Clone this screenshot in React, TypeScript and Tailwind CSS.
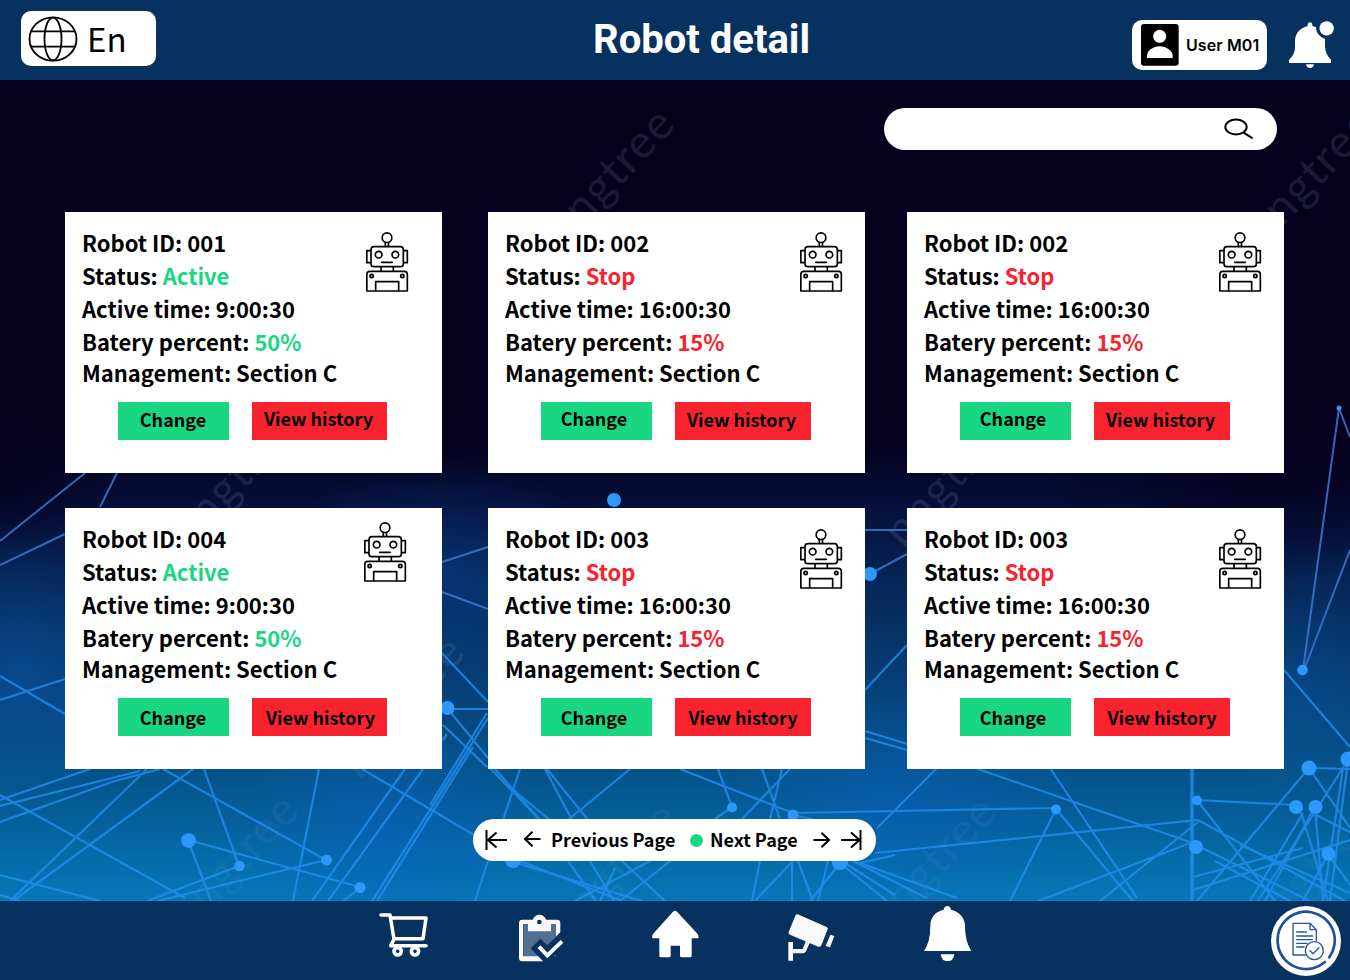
import React from "react";

type Seg = [number, number, number, number];

const upperLines: Seg[] = [
  [0, 541, 85, 473], [100, 507, 117, 473], [0, 565, 65, 534], [1339, 408, 1303, 670],
  [1350, 550, 1304, 670], [1339, 408, 1350, 437], [865, 530, 907, 530], [870, 574, 907, 554],
  [442, 562, 488, 547], [442, 592, 488, 609],
];

const lines: Seg[] = [
  [0, 676, 65, 714], [0, 700, 65, 679], [0, 800, 90, 769], [0, 806, 140, 771], [0, 822, 115, 781],
  [115, 781, 160, 769], [0, 795, 185, 898], [147, 769, 10, 901], [193, 769, 13, 901],
  [0, 875, 100, 901], [0, 895, 20, 901], [188, 840, 360, 887], [188, 840, 211, 901],
  [239, 866, 204, 769], [239, 866, 147, 901], [326, 860, 163, 769], [326, 860, 157, 901],
  [319, 769, 293, 901], [405, 769, 312, 901], [423, 769, 328, 901], [362, 769, 513, 858],
  [470, 747, 372, 901], [473, 747, 377, 901], [360, 888, 343, 901],
  [442, 653, 488, 702], [447, 709, 488, 709], [447, 708, 488, 758], [443, 725, 487, 767],
  [487, 713, 430, 805], [488, 718, 430, 810], [442, 741, 447, 734],
  [520, 769, 503, 820], [488, 766, 540, 820], [495, 769, 540, 820], [513, 790, 550, 820],
  [545, 769, 572, 820], [547, 769, 588, 820], [630, 769, 568, 820], [680, 769, 793, 813],
  [718, 769, 732, 807], [715, 819, 732, 807], [793, 813, 1056, 808], [762, 769, 780, 819],
  [782, 769, 770, 819], [790, 769, 742, 819], [793, 815, 825, 822],
  [488, 861, 475, 901], [513, 862, 642, 901], [520, 861, 622, 901], [568, 861, 596, 901], [590, 861, 614, 901],
  [622, 861, 665, 901], [670, 861, 620, 901], [650, 861, 575, 901], [615, 868, 600, 901],
  [760, 861, 752, 901], [793, 861, 755, 901], [792, 861, 792, 901], [798, 861, 813, 901],
  [828, 861, 818, 901], [840, 863, 810, 901], [840, 863, 887, 901], [845, 863, 895, 895],
  [853, 861, 927, 898], [860, 863, 957, 898], [860, 863, 895, 855],
  [865, 690, 907, 645], [865, 731, 907, 744], [865, 738, 907, 750], [937, 768, 877, 828],
  [975, 768, 1193, 843], [1050, 768, 1137, 898], [1056, 809, 1133, 901], [1056, 809, 1010, 901],
  [875, 853, 1198, 820], [1197, 800, 1296, 805], [1284, 670, 1350, 747], [1193, 842, 1038, 901],
  [1198, 822, 1100, 901], [1198, 820, 1345, 901], [1197, 800, 1275, 901], [1196, 845, 1310, 901],
  [1309, 768, 1197, 901], [1309, 768, 1350, 828], [1309, 768, 1350, 769], [1193, 877, 1303, 848],
  [1303, 813, 1250, 901], [1350, 757, 1258, 901], [1315, 808, 1323, 901], [1343, 768, 1323, 901],
  [1301, 812, 1328, 901], [1348, 760, 1330, 901], [1315, 806, 1265, 901], [1316, 815, 1350, 832],
  [1328, 854, 1350, 885], [1328, 854, 1303, 901], [1193, 890, 1350, 840], [1240, 845, 1350, 893], [1215, 861, 1290, 901],
];

const nodes: [number, number, number][] = [
  [614, 500, 7], [870, 574, 7], [447.5, 708, 7], [188.5, 840.5, 7.3], [239.5, 866, 5.3],
  [326.5, 860, 5.5], [360, 887.5, 5.5], [513, 860, 8], [732, 807.5, 5], [793, 815, 5.5], [840, 862, 8],
  [1056, 809.5, 5], [1197, 800.5, 5], [1196, 847, 7], [1309, 768, 7.5], [1348, 759, 7.5],
  [1296, 807, 7], [1315.5, 807, 7], [1328.5, 854, 7], [1302.5, 670, 5.3], [1339, 408, 2.5],
];

const marks: [number, number, number][] = [
  [564, 247, 0.17], [1264, 247, 0.17], [189, 549, 0.16], [903, 549, 0.16],
  [354, 775, 0.15], [188, 933, 0.09], [886, 935, 0.09], [568, 941, 0.1], [1266, 941, 0.07],
];

function Backdrop() {
  return (
    <svg className="absolute inset-0 h-full w-full" viewBox="0 80 1350 821" preserveAspectRatio="none" aria-hidden="true">
      <defs>
        <linearGradient id="sky" x1="0" y1="80" x2="0" y2="901" gradientUnits="userSpaceOnUse">
          <stop offset="0" stopColor="#05001c" />
          <stop offset="0.44" stopColor="#05001e" />
          <stop offset="0.52" stopColor="#06103a" />
          <stop offset="0.62" stopColor="#06285a" />
          <stop offset="0.74" stopColor="#064078" />
          <stop offset="0.86" stopColor="#05568e" />
          <stop offset="1" stopColor="#0678b9" />
        </linearGradient>
        <radialGradient id="glow"><stop offset="0" stopColor="#0a5fc0" stopOpacity="0.65" /><stop offset="1" stopColor="#0a5fc0" stopOpacity="0" /></radialGradient>
        <radialGradient id="dark"><stop offset="0" stopColor="#05001e" stopOpacity="0.9" /><stop offset="1" stopColor="#05001e" stopOpacity="0" /></radialGradient>
      </defs>
      <rect x="0" y="80" width="1350" height="821" fill="url(#sky)" />
      <ellipse cx="20" cy="670" rx="130" ry="130" fill="url(#glow)" opacity="0.5" />
      <ellipse cx="440" cy="570" rx="170" ry="110" fill="url(#glow)" opacity="0.4" />
      <ellipse cx="390" cy="830" rx="150" ry="120" fill="url(#glow)" opacity="0.8" />
      <ellipse cx="900" cy="800" rx="180" ry="110" fill="url(#glow)" opacity="0.8" />
      <ellipse cx="1300" cy="690" rx="110" ry="110" fill="url(#glow)" opacity="0.3" />
      <ellipse cx="1270" cy="470" rx="240" ry="110" fill="url(#dark)" />
      <ellipse cx="0" cy="480" rx="120" ry="70" fill="url(#dark)" />
      <g fontFamily="Lato, sans-serif" fontSize="46" letterSpacing="1.5" fill="#8f9ccb">
        {marks.map(([x, y, o]) => (
          <text key={`${x}-${y}`} transform={`translate(${x} ${y}) rotate(-47)`} opacity={o}>pngtree</text>
        ))}
      </g>
      <g stroke="#3f78d0" strokeWidth="2" opacity="0.85">
        {upperLines.map(([a, b, c, d], i) => <line key={i} x1={a} y1={b} x2={c} y2={d} />)}
      </g>
      <g stroke="#2492f4" strokeWidth="2.2" opacity="0.75">
        {lines.map(([a, b, c, d], i) => <line key={i} x1={a} y1={b} x2={c} y2={d} />)}
        <line x1="1192" y1="768" x2="1192" y2="901" strokeWidth="3.5" />
      </g>
      {nodes.map(([x, y, r]) => <circle key={`${x}-${y}`} cx={x} cy={y} r={r} fill="#2c98fb" />)}
    </svg>
  );
}

function RobotIcon({ className }: { className: string }) {
  return (
    <svg className={`h-[60px] w-[43px] shrink-0 ${className}`} viewBox="948 96 129 180" fill="none" stroke="#000" strokeWidth="5" strokeLinejoin="round" strokeLinecap="round">
      <circle cx="1011" cy="113" r="14.5" />
      <path d="M1006 128v11M1015.500 128v11" />
      <rect x="963" y="140" width="97" height="60" rx="9" />
      <path d="M961 152h-10.500v36h10.500M1062 152h10v36h-10" />
      <circle cx="986" cy="164" r="10" />
      <circle cx="1036" cy="164" r="10" />
      <path d="M995 187h32" />
      <path d="M993 202v11M1030 202v11" />
      <path d="M950.500 273v-50q0-9 9-9h103.500q9 0 9 9v50z" />
      <path d="M977 272v-27h69v27" />
      <circle cx="965" cy="228" r="5" />
      <circle cx="1057" cy="228" r="5" />
    </svg>
  );
}

type Robot = {
  id: string; status: string; time: string; battery: string; tone: string;
  icon: string; change: string; history: string;
};

const green = "text-[#19d683]";
const red = "text-[#f8232f]";

const robots: Robot[] = [
  { id: "001", status: "Active", time: "9:00:30", battery: "50%", tone: green, icon: "mt-5 mr-[33px]", change: "pr-px pb-1", history: "w-[135px] pr-[2px] pb-[5px]" },
  { id: "002", status: "Stop", time: "16:00:30", battery: "15%", tone: red, icon: "mt-5 mr-[22px]", change: "pr-[5px] pb-[5px]", history: "w-[136px] pr-[3px] pb-[3px]" },
  { id: "002", status: "Stop", time: "16:00:30", battery: "15%", tone: red, icon: "mt-5 mr-[22px]", change: "pr-[5px] pb-[5px]", history: "w-[136px] pr-[3px] pb-[3px]" },
  { id: "004", status: "Active", time: "9:00:30", battery: "50%", tone: green, icon: "mt-3.5 mr-[35px]", change: "pr-px", history: "w-[135px] pl-[2px]" },
  { id: "003", status: "Stop", time: "16:00:30", battery: "15%", tone: red, icon: "mt-[21px] mr-[22px]", change: "pr-[5px]", history: "w-[136px]" },
  { id: "003", status: "Stop", time: "16:00:30", battery: "15%", tone: red, icon: "mt-[21px] mr-[22px]", change: "pr-[5px]", history: "w-[136px]" },
];

function RobotCard({ robot }: { robot: Robot }) {
  return (
    <article className="flex h-[261px] w-[377px] flex-col bg-white">
      <div className="flex h-[190px] items-start justify-between">
        <div className="pt-[14px] pl-[17px] text-[22px] font-bold whitespace-nowrap text-black">
          <p className="h-[33px] leading-[33px]">Robot ID: {robot.id}</p>
          <p className="h-[33px] leading-[33px]">Status: <span className={robot.tone}>{robot.status}</span></p>
          <p className="h-[33px] leading-[33px]">Active time: {robot.time}</p>
          <p className="h-8 leading-[32px]">Batery percent: <span className={robot.tone}>{robot.battery}</span></p>
          <p className="h-8 leading-[31px]">Management: Section C</p>
        </div>
        <RobotIcon className={robot.icon} />
      </div>
      <div className="flex gap-[23px] pl-[53px] text-[18px] font-bold whitespace-nowrap text-black">
        <button className={`flex h-[38px] w-[111px] items-center justify-center bg-[#19d683] ${robot.change}`}>Change</button>
        <button className={`flex h-[38px] items-center justify-center bg-[#f8232f] ${robot.history}`}>View history</button>
      </div>
    </article>
  );
}

function Header() {
  return (
    <header className="flex h-20 shrink-0 items-start bg-[#07325f]">
      <button className="mt-[11px] ml-[21px] flex h-[55px] w-[135px] items-center rounded-[10px] bg-white pl-[7px]">
        <svg className="h-[46px] w-[50px]" viewBox="84 46 150 138" fill="none" stroke="#000" strokeWidth="5.500">
          <ellipse cx="159" cy="115" rx="70.500" ry="65" />
          <ellipse cx="159" cy="115" rx="25.500" ry="64" />
          <path d="M93 92h132M93 138h132" />
        </svg>
        <span className="ml-[9px] pb-px text-[33px] leading-[54px] text-black">En</span>
      </button>
      <h1 className="ml-[437px] w-[220px] pt-[15px] font-[Roboto] text-[40px] leading-[50px] font-bold whitespace-nowrap text-white">Robot detail</h1>
      <button className="mt-5 ml-[319px] flex h-[50px] w-[135px] items-center rounded-[10px] bg-white pl-[9px]">
        <svg className="h-[42px] w-[38px] shrink-0" viewBox="0 0 114 126">
          <rect width="113" height="125" rx="9" fill="#000" />
          <circle cx="56" cy="37" r="19.500" fill="#fff" />
          <path d="M18 102V95C18 80 37 67 56 67s39 13 39 28v7z" fill="#fff" />
        </svg>
        <span className="ml-[7px] font-[Inter] text-[16px] font-semibold tracking-[0.1px] whitespace-nowrap text-black">User M01</span>
      </button>
      <svg className="mt-5 ml-[21px] h-12 w-[47px]" viewBox="1314 60 141 144" fill="#fff">
        <path d="M1317 189v-10Q1335 164 1335 140v-17q1-35 38-45v-5q1-6 7-6t7 6v5l11 4q0 25 27 35v23q2 24 18 39v10z" />
        <circle cx="1430" cy="85" r="21.500" />
        <path d="M1368 193h24q-2 11-12 11t-12-11z" />
      </svg>
    </header>
  );
}

function Pager() {
  return (
    <nav className="mt-[50px] ml-[473px] flex h-[42px] w-[403px] items-center rounded-full bg-white text-[18px] font-bold whitespace-nowrap text-black">
      <svg className="ml-[11px] h-[22px] w-[23px]" viewBox="0 0 23 22" fill="none" stroke="#000" strokeWidth="2"><path d="M2.500 1v20M23 11H4M12.500 3.500L4 11L12.500 18.500" /></svg>
      <svg className="ml-4 h-[22px] w-[18px]" viewBox="0 0 18 22" fill="none" stroke="#000" strokeWidth="2"><path d="M17.500 10H2M9.500 2.800L2 10l7.500 7.200" /></svg>
      <button className="ml-[10px] w-[125px] pb-[2px] text-left">Previous Page</button>
      <span className="ml-[14px] h-[13px] w-[13px] rounded-full bg-[#19d683]" />
      <button className="ml-[7px] w-[90px] pb-[2px] text-left">Next Page</button>
      <svg className="ml-[13px] h-[22px] w-[18px]" viewBox="0 0 18 22" fill="none" stroke="#000" strokeWidth="2"><path d="M.5 11H16M8.500 3.800l7.500 7.200L8.500 18.200" /></svg>
      <svg className="ml-[9px] h-[22px] w-[22px]" viewBox="0 0 22 22" fill="none" stroke="#000" strokeWidth="2"><path d="M20.500 1v20M1 11h19M11 3.500l8.500 7.500L11 18.500" /></svg>
    </nav>
  );
}

function Footer() {
  return (
    <footer className="flex h-[79px] shrink-0 items-start bg-[#07325f]">
      <svg className="mt-3 ml-[379px] h-[45px] w-[49px]" viewBox="57 38 147 135" fill="none" stroke="#fff" strokeWidth="10.500" strokeLinecap="round" strokeLinejoin="round">
        <path d="M63 44H90L102 117L92 136H198M93 53H198L189 115H103" />
        <circle cx="113" cy="153" r="11" strokeWidth="11" />
        <circle cx="165" cy="153" r="11" strokeWidth="11" />
      </svg>
      <svg className="mt-[13px] ml-[90px] h-[48px] w-[46px]" viewBox="474 42 138 144">
        <path d="M490 72h98v98h-98z" fill="#526f8f" />
        <path d="M487 59h31q7-15 20-15t21 15h32q10 0 10 10v28L588 110V72h-15v22h-69V72h-15v97h46l15 15h-63q-10 0-10-10V69q0-10 10-10z" fill="#f9f8fa" />
        <circle cx="538" cy="66" r="7" fill="#07325f" />
        <path d="M512 145l29-29 21 20 39-38 12 12v30l-46 44h-17z" fill="#07325f" />
        <path d="M537 140l25 26 44-42" fill="none" stroke="#f9f8fa" strokeWidth="12" />
      </svg>
      <svg className="mt-[9px] ml-[87px] h-12 w-12" viewBox="34 28 144 144" fill="#fff">
        <path d="M100 33q6-5 12 0l62 67q4 6 2 13h-20v52q0 5-5 5h-25q-5 0-5-5v-30H93v30q0 5-5 5H64q-5 0-5-5v-52H38q-2-7 2-13z" />
      </svg>
      <svg className="mt-3 ml-[88px] h-12 w-12" viewBox="441 39 144 144" fill="#f8f8fa">
        <path d="M473 43l87 38q5 2 3 7l-19 48q-3 6-9 4l-85-36q-6-3-4-8l20-49q2-6 7-4z" />
        <path d="M571 104l12 4-13 34-13-4z" />
        <path d="M445 126h14v21h29l10-25 12 5-12 27q-3 6-10 6h-29v22h-14z" />
      </svg>
      <svg className="mt-1 ml-[88px] h-[57px] w-12" viewBox="849 14 144 171" fill="#fff">
        <path d="M852 152q19-26 19-76c0-24 14-42 40-48q2-11 11-11t11 11c28 7 42 26 42 50q0 46 19 74z" />
        <path d="M902 162h41q-3 21-20.500 21T902 162z" />
      </svg>
      <svg className="mt-[5px] ml-[300px] h-[70px] w-[70px]" viewBox="63 31 210 210">
        <circle cx="168" cy="136" r="105" fill="#fff" />
        <g fill="none" stroke="#2455a8" strokeLinecap="round" strokeLinejoin="round">
          <path d="M241 180A86 86 0 1 0 229 195" strokeWidth="8" stroke="#204f9f" transform="rotate(4 168 136)" />
          <path d="M171 178h-42V83h51l19 19v34M180 83v19h19" strokeWidth="4" />
          <path d="M140 109h29M140 121h48M140 132h47M140 143h31M140 154h22" strokeWidth="4" />
          <circle cx="193" cy="165" r="27" fill="#fff" strokeWidth="4" />
          <path d="M180 165l9 9 18-18" strokeWidth="4" />
        </g>
      </svg>
    </footer>
  );
}

export default function App() {
  return (
    <div className="flex h-[980px] w-[1350px] flex-col overflow-hidden font-['Noto_Sans_CJK_SC',sans-serif]">
      <Header />
      <main className="relative h-[821px] shrink-0 overflow-hidden bg-[#05001c]">
        <Backdrop />
        <div className="relative flex flex-col">
          <label className="mt-7 ml-[884px] flex h-[42px] w-[393px] items-center rounded-full bg-white">
            <input className="ml-6 w-[310px] bg-transparent outline-none" aria-label="Search" />
            <svg className="ml-[6px] h-[22px] w-[30px]" viewBox="1122 354 90 66" fill="none" stroke="#000" strokeWidth="6">
              <ellipse cx="1158" cy="381" rx="32" ry="22.500" />
              <path d="M1180 397l28 18" />
            </svg>
          </label>
          <section className="mt-[62px] ml-[65px] grid grid-cols-[423px_419px_377px] gap-y-[35px]">
            {robots.map((robot, i) => <RobotCard key={i} robot={robot} />)}
          </section>
          <Pager />
        </div>
      </main>
      <Footer />
    </div>
  );
}
